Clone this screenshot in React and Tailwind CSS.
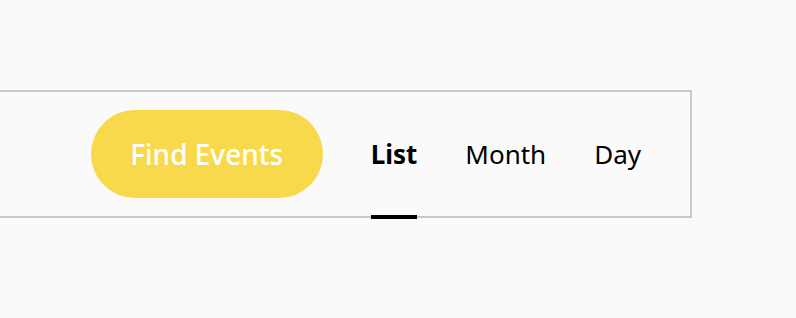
import React, { useState } from 'react'

const views = ['List', 'Month', 'Day']

export default function App() {
  const [active, setActive] = useState('List')

  return (
    <div className="min-h-screen bg-[#fafafa] pt-[90px] font-['Noto_Sans',sans-serif]">
      {/* Event bar, left edge runs off the page */}
      <div className="w-[692px] h-[128px] border-y-2 border-r-2 border-[#c8c8c8] flex items-stretch justify-end pr-[25px]">
        <div className="flex items-center mr-6">
          <button className="w-[232px] h-[88px] rounded-full bg-[#f9d94c] text-white text-[28px] font-medium leading-none">
            Find Events
          </button>
        </div>

        {views.map((v) => (
          <button
            key={v}
            onClick={() => setActive(v)}
            className={
              'relative px-6 flex items-center text-[26px] text-black leading-none ' +
              (active === v ? 'font-bold' : 'font-normal')
            }
          >
            {v}
            {active === v && (
              <span className="absolute left-6 right-6 bottom-[-3px] h-1 bg-black" />
            )}
          </button>
        ))}
      </div>
    </div>
  )
}
